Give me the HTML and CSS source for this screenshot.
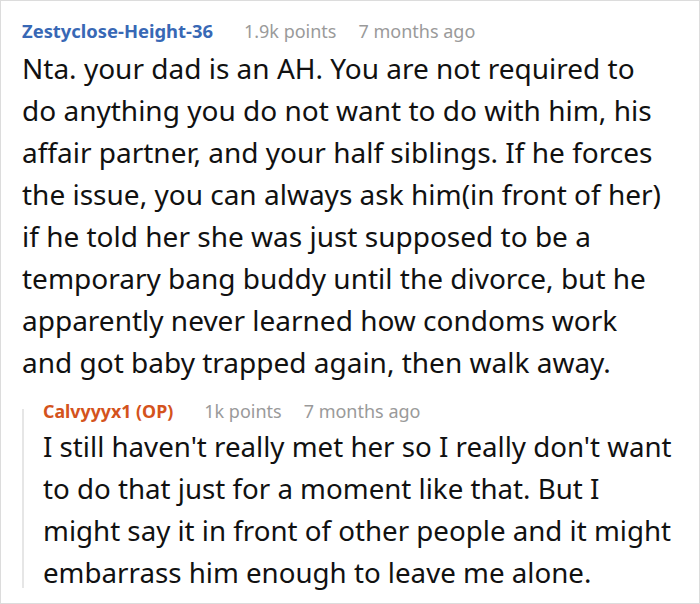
FILE: index.html
```html
<!DOCTYPE html>
<html>
<head>
<meta charset="utf-8">
<link rel="stylesheet" href="styles.css">
</head>
<body>
<div class="frame">
  <div class="comment">
    <div class="meta">
      <span class="user user-blue">Zestyclose-Height-36</span>
      <span class="info">1.9k points</span>
      <span class="info">7 months ago</span>
    </div>
    <p class="text">Nta. your dad is an AH. You are not required to<br>do anything you do not want to do with him, his<br>affair partner, and your half siblings. If he forces<br>the issue, you can always ask him(in front of her)<br>if he told her she was just supposed to be a<br>temporary bang buddy until the divorce, but he<br>apparently never learned how condoms work<br>and got baby trapped again, then walk away.</p>
    <div class="reply">
      <div class="meta reply-meta">
        <span class="user user-orange">Calvyyyx1 (OP)</span>
        <span class="info">1k points</span>
        <span class="info">7 months ago</span>
      </div>
      <p class="text reply-text">I still haven't really met her so I really don't want<br>to do that just for a moment like that. But I<br>might say it in front of other people and it might<br>embarrass him enough to leave me alone.</p>
    </div>
  </div>
</div>
</body>
</html>
```
FILE: styles.css
```css
html, body {
  margin: 0;
  padding: 0;
  background: #fff;
}
.frame {
  box-sizing: border-box;
  width: 700px;
  height: 604px;
  border: 1px solid #dcdcdc;
  padding: 17px 0 0 21px;
  font-family: "Noto Sans", "DejaVu Sans", sans-serif;
  color: #111;
  overflow: hidden;
}
.meta {
  display: flex;
  align-items: baseline;
  gap: 22px;
  font-size: 18px;
  line-height: 26px;
  white-space: nowrap;
}
.meta .user + .info {
  margin-left: 9px;
}
.user {
  font-weight: 700;
  font-size: 18.4px;
}
.user-blue {
  color: #3868b5;
}
.user-orange {
  color: #d4531c;
  font-size: 17.8px;
}
.info {
  color: #9a9a9a;
}
.text {
  margin: 3px 0 0 0;
  font-size: 28px;
  line-height: 42px;
  white-space: nowrap;
}
.reply {
  position: relative;
  margin-top: 15px;
  padding-left: 21px;
}
.reply::before {
  content: "";
  position: absolute;
  left: 0;
  top: 11px;
  bottom: 5px;
  width: 2px;
  background: #e6e6e6;
}
.reply-text {
  margin-top: 1px;
  font-size: 27.7px;
}
```
